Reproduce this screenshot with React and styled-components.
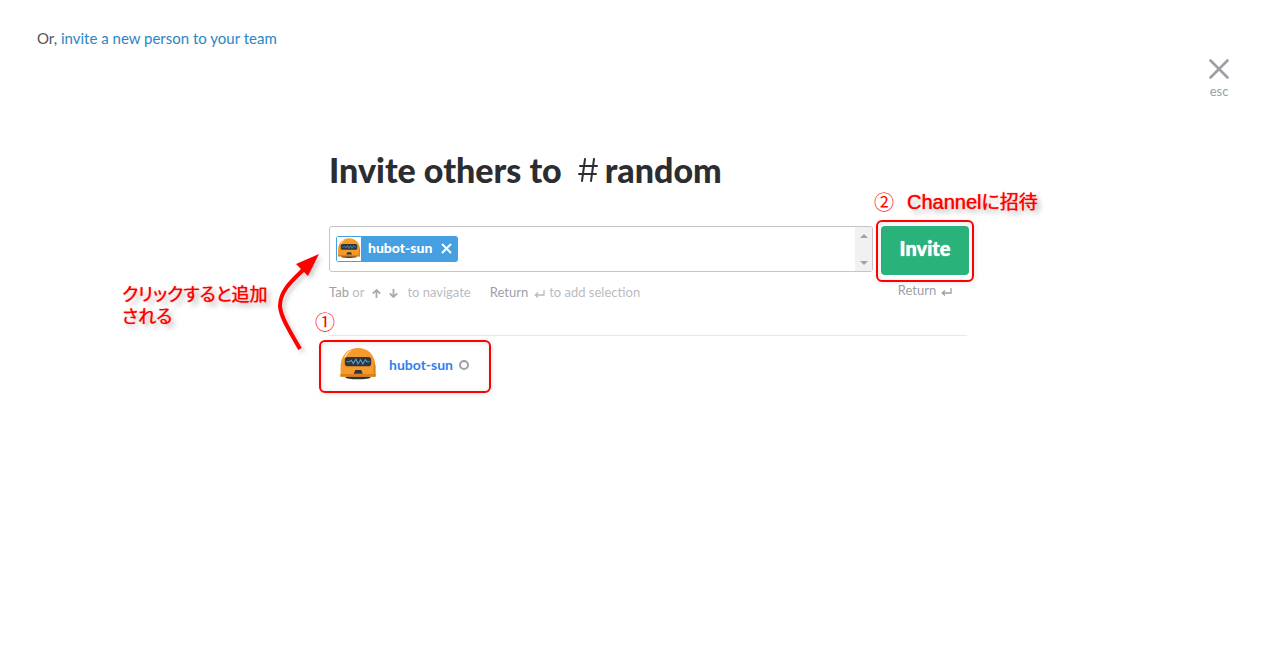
import React from "react";
import styled, { createGlobalStyle } from "styled-components";

const GlobalStyle = createGlobalStyle`
  *, *::before, *::after { box-sizing: border-box; }
  body {
    margin: 0;
    background: #fff;
    color: #2c2d30;
    font-family: Lato, "Noto Sans CJK JP", sans-serif;
    font-size: 15px;
  }
  button, input { font-family: inherit; }
`;

const Header = styled.header`
  display: flex;
  justify-content: space-between;
  align-items: flex-start;
  padding: 27px 58px 0 37px;
`;

const Intro = styled.p`
  margin: 0;
  line-height: 22px;
  color: #555459;
`;

const Link = styled.a`
  color: #2d85c4;
  text-decoration: none;
`;

const CloseButton = styled.button`
  display: flex;
  flex-direction: column;
  align-items: center;
  gap: 3px;
  margin-top: 31px;
  padding: 0;
  border: 0;
  background: none;
  color: #9e9ea6;
  font-size: 13px;
  line-height: 16px;
  cursor: pointer;
`;

const Main = styled.main`
  padding: 49px 24px 48px 34px;
`;

const Column = styled.div`
  max-width: 640px;
  margin: 0 auto;
`;

const Title = styled.h1`
  display: flex;
  align-items: center;
  margin: 0 0 34px;
  font-size: 34px;
  font-weight: 900;
  line-height: 44px;
`;

const HashIcon = styled.svg`
  margin: 0 7px 0 16px;
`;

const Form = styled.form`
  display: flex;
  align-items: flex-start;
  gap: 8px;
`;

const FieldGroup = styled.div`
  flex: 1;
  min-width: 0;
`;

const TokenField = styled.div`
  display: flex;
  height: 46px;
  border: 1px solid #c5c5c5;
  border-radius: 3px;
  overflow: hidden;
`;

const Tokens = styled.div`
  display: flex;
  flex: 1;
  align-items: center;
  min-width: 0;
  padding: 0 6px;
`;

const Token = styled.span`
  display: flex;
  align-items: center;
  height: 26px;
  padding: 1px;
  border-radius: 3px;
  background: #459fe0;
  color: #fff;
  font-size: 14px;
  font-weight: 900;
`;

const TokenName = styled.span`
  padding-bottom: 3px;
`;

const TokenAvatar = styled.span`
  display: flex;
  align-items: center;
  justify-content: center;
  width: 24px;
  height: 24px;
  margin-right: 7px;
  background: #fff;
`;

const TokenRemove = styled.button`
  display: flex;
  padding: 0 5px 2px 9px;
  border: 0;
  background: none;
  color: inherit;
  cursor: pointer;
`;

const TokenInput = styled.input`
  flex: 1;
  min-width: 0;
  height: 26px;
  padding: 0 6px;
  border: 0;
  outline: 0;
  background: none;
  font-size: 14px;
`;

const Scroller = styled.div`
  display: flex;
  flex-direction: column;
  justify-content: space-between;
  align-items: center;
  width: 17px;
  padding: 7px 0 6px;
  background: #f1f1f1;
`;

const Hints = styled.div`
  display: flex;
  gap: 19px;
  margin-top: 11px;
  color: #babbbf;
  font-size: 13px;
  line-height: 18px;
`;

const Hint = styled.span`
  display: flex;
  align-items: center;
  white-space: pre;
`;

const Key = styled.span`
  color: #9e9ea6;
`;

const KeyIcon = styled.svg`
  margin: 2px ${(p) => p.$after}px 0 ${(p) => p.$before}px;
`;

const SubmitGroup = styled.div`
  position: relative;
  display: flex;
  flex-direction: column;
  align-items: center;
  width: 88px;
`;

const InviteButton = styled.button`
  width: 100%;
  height: 49px;
  padding: 0 0 6px;
  border: 0;
  border-radius: 4px;
  background: #2ab27b;
  color: #fff;
  font-size: 20px;
  font-weight: 900;
  text-shadow: 0 0 1px #fff;
  cursor: pointer;
`;

const SubmitHint = styled(Hint)`
  margin-top: 6px;
  color: #9e9ea6;
  font-size: 13px;
  line-height: 18px;
`;

const Results = styled.ul`
  position: relative;
  margin: 34px 2px 0 0;
  padding: 11px 0 0 10px;
  border-top: 1px solid #e8e8e8;
  list-style: none;
`;

const Person = styled.li`
  display: flex;
  align-items: center;
  height: 36px;
`;

const PersonName = styled.a`
  margin: 0 6px 0 12px;
  padding-bottom: 2px;
  color: #2d80f0;
  font-size: 14px;
  font-weight: 700;
  text-decoration: none;
`;

const Presence = styled.span`
  width: 10px;
  height: 10px;
  border: 2px solid #a0a0a2;
  border-radius: 50%;
`;

const Outline = styled.span`
  position: absolute;
  top: ${(p) => p.$top}px;
  left: ${(p) => p.$left}px;
  width: ${(p) => p.$width}px;
  height: ${(p) => p.$height}px;
  border: 2px solid #f00;
  border-radius: 6px;
  filter: drop-shadow(1px 1px 2px rgba(0, 0, 0, 0.15));
  pointer-events: none;
`;

const Note = styled.span`
  position: absolute;
  top: ${(p) => p.$top}px;
  left: ${(p) => p.$left}px;
  color: #f00;
  font-family: "Liberation Sans", "Noto Sans CJK JP", sans-serif;
  font-size: ${(p) => p.$size || 20}px;
  line-height: 22px;
  white-space: pre;
  font-feature-settings: "palt";
  pointer-events: none;
`;

const ShadowNote = styled(Note)`
  text-shadow: 0 0 1px #f00, 0 0 2px #fff, 4px 4px 5px rgba(0, 0, 0, 0.3);
`;

const Cjk = styled.span`
  font-size: 19px;
`;

const Arrow = styled.svg`
  position: absolute;
  top: -84px;
  left: -56px;
  overflow: visible;
  filter: drop-shadow(3px 3px 2px rgba(0, 0, 0, 0.18));
  pointer-events: none;
`;

function Hubot({ size }) {
  return (
    <svg width={size} height={size} viewBox="0 0 36 36" aria-hidden="true">
      <ellipse cx="18" cy="29.500" rx="12" ry="2" fill="#303238" />
      <path d="M1.500 19C2 8 9 2 18 2s16 6 16.500 17v10h-33z" fill="#f69a2c" />
      <path d="M33 14l1.500 5v10h-2z" fill="#d9821d" />
      <path d="M1.300 26.500h33.400v2.700H1.300z" fill="#d9821d" />
      <path d="M4.800 11C6.500 6.800 9 4.600 12.500 3.700c-3 1.800-5 3.800-6.300 6.800z" fill="#fff4df" />
      <rect x="5.500" y="10.500" width="25" height="8.800" rx="2.800" fill="#30343b" />
      <path
        d="M7 15h3l1.500-1.500 2 3 2.500-4 2 4.500 2.500-4 2 4 2.500-4 1.500 2h2.500"
        fill="none"
        stroke="#4ba9d6"
        strokeWidth="1"
      />
      <path d="M15.500 22.700h5.500l1.500 3.600h-8.500z" fill="#30343b" />
    </svg>
  );
}

function ReturnIcon({ before, after = 0 }) {
  return (
    <KeyIcon
      $before={before}
      $after={after}
      width="11"
      height="9"
      viewBox="0 0 11 9"
      fill="none"
      stroke="currentColor"
      strokeWidth="1.3"
      aria-hidden="true"
    >
      <path d="M10 1v5H1M4 3.500 1.300 6 4 8.500" />
    </KeyIcon>
  );
}

function VerticalArrow({ down, before, after = 0 }) {
  return (
    <KeyIcon
      $before={before}
      $after={after}
      width="9"
      height="9"
      viewBox="0 0 9 9"
      fill="none"
      stroke="#aaabb0"
      strokeWidth="1.8"
      aria-hidden="true"
    >
      <path d={down ? "M4.5 0v8M.8 4.3 4.5 8 8.200 4.3" : "M4.5 9V1M.8 4.7 4.5 1 8.200 4.7"} />
    </KeyIcon>
  );
}

export default function App() {
  return (
    <>
      <GlobalStyle />
      <Header>
        <Intro>
          Or, <Link href="#invite">invite a new person to your team</Link>
        </Intro>
        <CloseButton type="button">
          <svg
            width="22"
            height="22"
            viewBox="0 0 22 22"
            stroke="currentColor"
            strokeWidth="2.6"
            strokeLinecap="round"
            aria-hidden="true"
          >
            <path d="M2.5 2.5l17 17M19.5 2.5l-17 17" />
          </svg>
          esc
        </CloseButton>
      </Header>
      <Main>
        <Column>
          <Title>
            Invite others to
            <HashIcon
              width="20"
              height="24"
              viewBox="0 0 20 24"
              fill="none"
              stroke="currentColor"
              strokeWidth="2"
              strokeLinecap="round"
              role="img"
              aria-label="channel"
            >
              <path d="M7 1 4 23M16 1l-3 22M2 8h17M1 16h17" />
            </HashIcon>
            random
          </Title>
          <Form onSubmit={(e) => e.preventDefault()}>
            <FieldGroup>
              <TokenField>
                <Tokens>
                  <Token>
                    <TokenAvatar>
                      <Hubot size={24} />
                    </TokenAvatar>
                    <TokenName>hubot-sun</TokenName>
                    <TokenRemove type="button" aria-label="Remove hubot-sun">
                      <svg
                        width="11"
                        height="11"
                        viewBox="0 0 11 11"
                        stroke="currentColor"
                        strokeWidth="2"
                        aria-hidden="true"
                      >
                        <path d="M1 1l9 9M10 1l-9 9" />
                      </svg>
                    </TokenRemove>
                  </Token>
                  <TokenInput type="text" aria-label="People to invite" />
                </Tokens>
                <Scroller aria-hidden="true">
                  <svg width="8" height="4" viewBox="0 0 8 4" fill="#a3a3a3">
                    <path d="M0 4 4 0l4 4z" />
                  </svg>
                  <svg width="8" height="4" viewBox="0 0 8 4" fill="#a3a3a3">
                    <path d="M0 0h8L4 4z" />
                  </svg>
                </Scroller>
              </TokenField>
              <Hints>
                <Hint>
                  <Key>Tab</Key> or
                  <VerticalArrow before={8} />
                  <VerticalArrow down before={8} after={9} />
                  to navigate
                </Hint>
                <Hint>
                  <Key>Return</Key>
                  <ReturnIcon before={6} after={4} />
                  to add selection
                </Hint>
              </Hints>
            </FieldGroup>
            <SubmitGroup>
              <InviteButton type="submit">Invite</InviteButton>
              <SubmitHint>
                Return
                <ReturnIcon before={5} />
              </SubmitHint>
              <Outline $top={-6} $left={-5} $width={98} $height={62} />
              <Note $top={-34} $left={-7}>②</Note>
              <ShadowNote $top={-35} $left={26}>
                Channel<Cjk>に招待</Cjk>
              </ShadowNote>
            </SubmitGroup>
          </Form>
          <Results>
            <Person>
              <Hubot size={38} />
              <PersonName href="#hubot-sun">hubot-sun</PersonName>
              <Presence role="img" aria-label="away" />
            </Person>
            <Outline $top={4} $left={-10} $width={172} $height={53} />
            <Note $top={-24} $left={-14}>①</Note>
            <ShadowNote $top={-52} $left={-207} $size={18}>
              {"クリックすると追加\nされる"}
            </ShadowNote>
            <Arrow width="48" height="100" viewBox="0 0 48 100" aria-hidden="true">
              <path
                d="M27 97C17 79 8 66 7 54c0-16 13-26 24-37"
                fill="none"
                stroke="#f00"
                strokeWidth="4"
              />
              <path d="M46 2 23 12l12 12z" fill="#f00" />
            </Arrow>
          </Results>
        </Column>
      </Main>
    </>
  );
}
